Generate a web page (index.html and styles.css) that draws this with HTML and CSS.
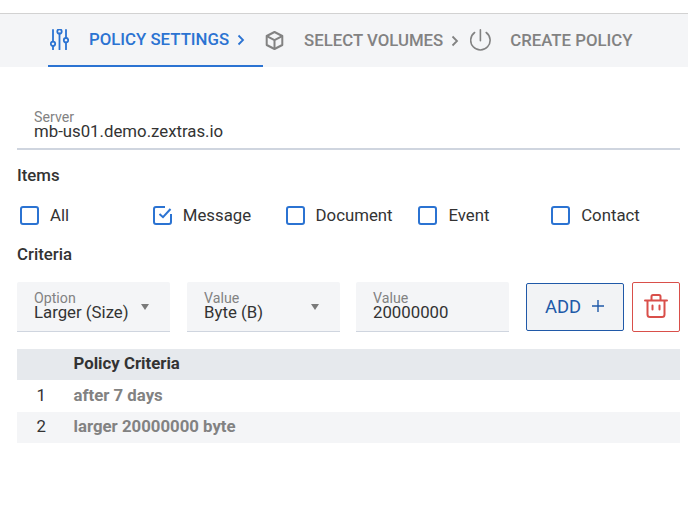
FILE: index.html
```html
<!DOCTYPE html>
<html lang="en">
<head>
    <meta charset="UTF-8">
    <title>Create Policy</title>
    <link rel="stylesheet" href="styles.css">
</head>
<body>
<div class="stepper">
    <div class="step step-active">
        <svg width="19" height="21" viewBox="0 0 19 21" fill="none" stroke="#2b73d2" stroke-width="1.800" stroke-linecap="round">
            <path d="M3 1v11.500M3 17v3.500M9.500 4.500v16M16 1v8M16 13.500v7"/>
            <circle cx="3" cy="14.800" r="2.200"/>
            <circle cx="9.500" cy="2.500" r="2.200"/>
            <circle cx="16" cy="11.200" r="2.200"/>
        </svg>
        <span class="step-label">POLICY SETTINGS</span>
        <svg class="chevron" width="10" height="12" viewBox="0 0 10 12" fill="none" stroke="#2b73d2" stroke-width="1.800"><path d="M2.500 1.500L7 6l-4.500 4.500"/></svg>
    </div>
    <div class="step step-volumes">
        <svg width="19" height="19" viewBox="0 0 19 19" fill="none" stroke="#828282" stroke-width="2" stroke-linejoin="round">
            <path d="M9.500 1l7.800 4v9l-7.800 4-7.800-4V5z"/>
            <path d="M1.800 5.100l7.700 4.100 7.700-4.100M9.500 9.200v8.600"/>
        </svg>
        <span class="step-label">SELECT VOLUMES</span>
        <svg class="chevron" width="10" height="12" viewBox="0 0 10 12" fill="none" stroke="#828282" stroke-width="1.800"><path d="M2.500 1.500L7 6l-4.500 4.500"/></svg>
    </div>
    <div class="step step-create">
        <svg width="21" height="23" viewBox="0 0 21 23" fill="none" stroke="#828282" stroke-width="1.600" stroke-linecap="round">
            <path d="M10.400 .8v11"/>
            <path d="M4.600 3.500a9.700 9.700 0 1 0 11.600 0"/>
        </svg>
        <span class="step-label">CREATE POLICY</span>
    </div>
</div>

<div class="content">
    <div class="server-field">
        <span class="field-label">Server</span>
        <span class="field-value">mb-us01.demo.zextras.io</span>
    </div>

    <h3 class="section-title items-title">Items</h3>
    <div class="checks">
        <div class="check">
            <svg width="19" height="19" viewBox="0 0 19 19" fill="none" stroke="#2b73d2" stroke-width="2"><rect x="1" y="1" width="17" height="17" rx="2"/></svg>
            <span>All</span>
        </div>
        <div class="check">
            <svg width="19" height="19" viewBox="0 0 19 19" fill="none" stroke="#2b73d2" stroke-width="2"><path d="M12 1H3a2 2 0 0 0-2 2v13a2 2 0 0 0 2 2h13a2 2 0 0 0 2-2V8"/><path d="M6.500 8l3.500 3.200L17.500 3"/></svg>
            <span>Message</span>
        </div>
        <div class="check">
            <svg width="19" height="19" viewBox="0 0 19 19" fill="none" stroke="#2b73d2" stroke-width="2"><rect x="1" y="1" width="17" height="17" rx="2"/></svg>
            <span>Document</span>
        </div>
        <div class="check">
            <svg width="19" height="19" viewBox="0 0 19 19" fill="none" stroke="#2b73d2" stroke-width="2"><rect x="1" y="1" width="17" height="17" rx="2"/></svg>
            <span>Event</span>
        </div>
        <div class="check">
            <svg width="19" height="19" viewBox="0 0 19 19" fill="none" stroke="#2b73d2" stroke-width="2"><rect x="1" y="1" width="17" height="17" rx="2"/></svg>
            <span>Contact</span>
        </div>
    </div>

    <h3 class="section-title criteria-title">Criteria</h3>
    <div class="criteria-row">
        <div class="input-box">
            <div class="input-text">
                <span class="field-label">Option</span>
                <span class="field-value">Larger (Size)</span>
            </div>
            <span class="caret"></span>
        </div>
        <div class="input-box input-narrow-gap">
            <div class="input-text">
                <span class="field-label">Value</span>
                <span class="field-value">Byte (B)</span>
            </div>
            <span class="caret"></span>
        </div>
        <div class="input-box">
            <div class="input-text">
                <span class="field-label">Value</span>
                <span class="field-value">20000000</span>
            </div>
        </div>
        <button class="btn-add">ADD
            <svg width="14" height="14" viewBox="0 0 14 14" fill="none" stroke="#2059a8" stroke-width="1.400"><path d="M7 1v12M1 7h12"/></svg>
        </button>
        <button class="btn-delete">
            <svg width="24" height="24" viewBox="0 0 24 24" fill="none" stroke="#d94f4a" stroke-width="2" stroke-linecap="round" stroke-linejoin="round">
                <path d="M1 6.500h22M7.500 6V2.500a1.500 1.500 0 0 1 1.500-1.500h6a1.500 1.500 0 0 1 1.500 1.500V6M3.500 6.500v14a2.500 2.500 0 0 0 2.500 2.500h12a2.500 2.500 0 0 0 2.500-2.500v-14M8.500 11.500v4M15.500 11.500v4"/>
            </svg>
        </button>
    </div>

    <table class="criteria-table">
        <thead>
            <tr><th class="col-num"></th><th>Policy Criteria</th></tr>
        </thead>
        <tbody>
            <tr class="row-first"><td class="col-num">1</td><td class="col-text">after 7 days</td></tr>
            <tr class="row-alt"><td class="col-num">2</td><td class="col-text">larger 20000000 byte</td></tr>
        </tbody>
    </table>
</div>
</body>
</html>
```

FILE: styles.css
```css
body {
    margin: 0;
    padding-top: 13px;
    font-family: Roboto, "Liberation Sans", sans-serif;
    font-size: 16.8px;
    color: #333;
    background-color: #fff;
}

.stepper {
    display: flex;
    align-items: stretch;
    height: 53px;
    padding-left: 48px;
    border-top: 1px solid #d2d2d2;
    background-color: #f4f5f7;
}

.step {
    display: flex;
    align-items: center;
    color: #828282;
    font-weight: 500;
}

.step-label {
    padding-bottom: 2px;
}

.step-active {
    width: 215px;
    box-sizing: border-box;
    padding-left: 2px;
    border-bottom: 2px solid #2b73d2;
    color: #2b73d2;
}

.step-active .step-label {
    margin-left: 20px;
}

.step-active .chevron {
    margin-left: 7px;
}

.step-volumes {
    padding-left: 2px;
}

.step-volumes .step-label {
    margin-left: 20px;
}

.step-volumes .chevron {
    margin-left: 7px;
}

.step-create {
    margin-left: 10px;
}

.step-create .step-label {
    margin-left: 19px;
}

.content {
    padding: 0 8px 0 17px;
}

.field-label {
    display: block;
    font-size: 14.200px;
    line-height: 13px;
    color: #828282;
}

.field-value {
    display: block;
    font-size: 16.800px;
    line-height: 14px;
    color: #333;
}

.server-field {
    margin-top: 44px;
    height: 39px;
    padding-left: 17px;
    box-sizing: border-box;
    border-bottom: 2px solid #cfd5df;
}

.section-title {
    margin: 0;
    font-size: 16.800px;
    font-weight: 500;
    line-height: 20px;
}

.items-title {
    margin-top: 15px;
}

.checks {
    display: grid;
    grid-template-columns: repeat(5, 132.800px);
    margin-top: 21px;
}

.check {
    display: flex;
    align-items: center;
    gap: 11px;
    height: 19px;
    padding-left: 3px;
}

.check span {
    padding-bottom: 2px;
}

.criteria-title {
    margin-top: 19px;
}

.criteria-row {
    display: flex;
    align-items: flex-start;
    margin-top: 18px;
}

.input-box {
    display: flex;
    width: 153px;
    height: 50px;
    margin-right: 17px;
    box-sizing: border-box;
    padding: 10px 17px 0;
    border-bottom: 1px solid #cfd5df;
    border-radius: 2px 2px 0 0;
    background-color: #f4f5f7;
}

.input-narrow-gap {
    margin-right: 16px;
}

.input-text {
    flex: 1;
}

.caret {
    width: 0;
    height: 0;
    margin: 12px 4px 0 0;
    border-top: 6px solid #7a7a7a;
    border-left: 4.500px solid transparent;
    border-right: 4.500px solid transparent;
}

.btn-add {
    display: flex;
    align-items: center;
    justify-content: center;
    gap: 10px;
    width: 98px;
    height: 48px;
    margin: 1px 8px 0 0;
    padding: 0 0 2px;
    border: 1px solid #2059a8;
    border-radius: 2px;
    background-color: #f2f3f5;
    color: #2059a8;
    font-family: inherit;
    font-size: 18.400px;
}

.btn-delete {
    display: flex;
    align-items: center;
    justify-content: center;
    width: 48px;
    height: 50px;
    padding: 0 0 2px;
    border: 1px solid #d94f4a;
    border-radius: 2px;
    background-color: #fff;
}

.criteria-table {
    width: 100%;
    margin-top: 17px;
    border-collapse: collapse;
    line-height: 20px;
}

.criteria-table th {
    height: 31px;
    padding: 4px 0 0;
    box-sizing: border-box;
    vertical-align: top;
    background-color: #e6e9ed;
    text-align: left;
    font-weight: 700;
}

.criteria-table td {
    height: 31px;
    padding: 4px 0 0;
    box-sizing: border-box;
    vertical-align: top;
}

.criteria-table .row-first td {
    height: 32px;
    padding-top: 5px;
}

.col-num {
    width: 56.500px;
    text-align: center;
}

.criteria-table td.col-num {
    padding-right: 8px;
}

.col-text {
    font-weight: 700;
    color: #828282;
}

.row-alt td {
    background-color: #f4f5f7;
}
```
